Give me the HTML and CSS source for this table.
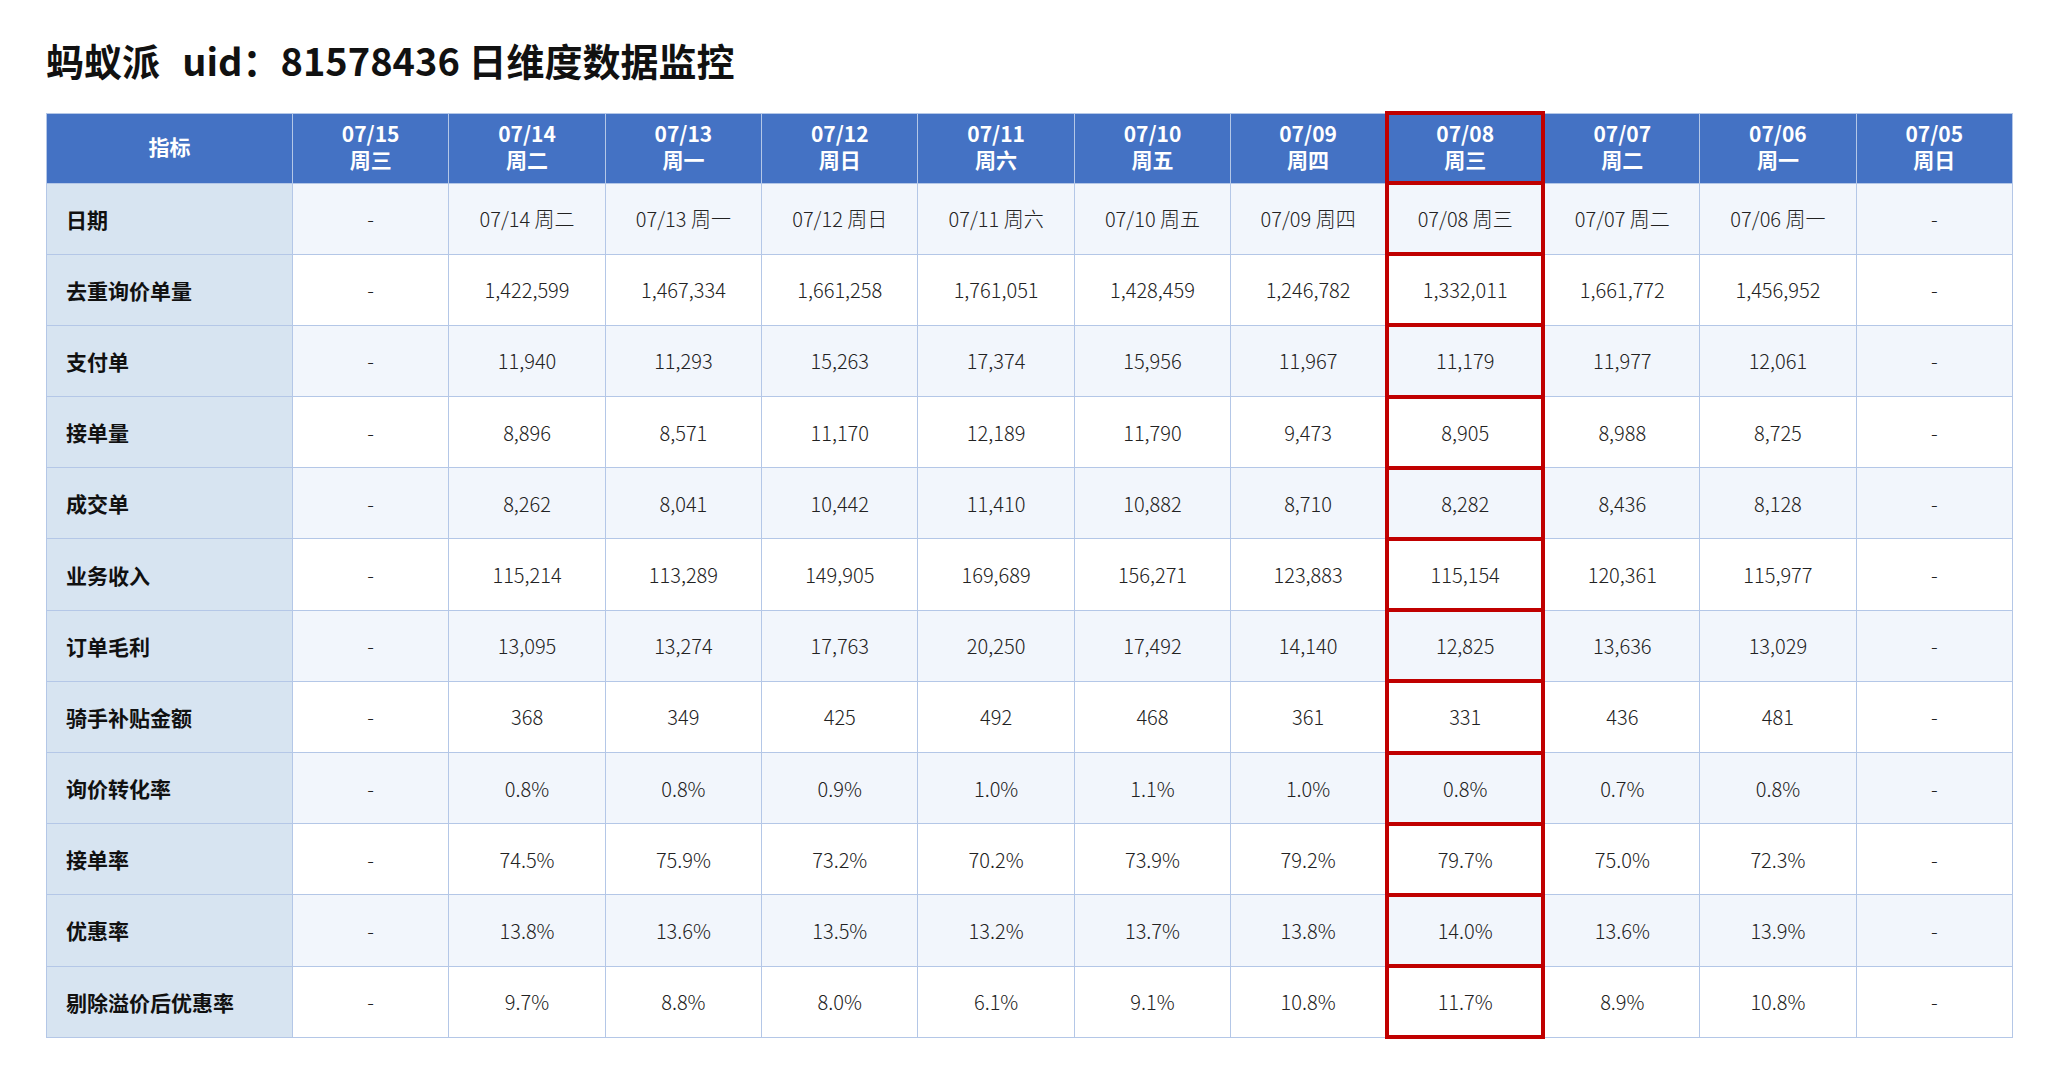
FILE: index.html
```html
<!DOCTYPE html>
<html lang="zh-CN">
<head>
<meta charset="utf-8">
<title>蚂蚁派 日维度数据监控</title>
<link rel="stylesheet" href="styles.css">
</head>
<body>
<div class="page">
  <h1 class="title">蚂蚁派<span class="gap">&nbsp;&nbsp;</span>uid：81578436 日维度数据监控</h1>
  <table class="grid">
    <colgroup>
      <col class="c-label">
      <col><col><col><col><col><col><col><col><col><col><col>
    </colgroup>
    <thead>
      <tr>
        <th>指标</th>
        <th>07/15<br>周三</th>
        <th>07/14<br>周二</th>
        <th>07/13<br>周一</th>
        <th>07/12<br>周日</th>
        <th>07/11<br>周六</th>
        <th>07/10<br>周五</th>
        <th>07/09<br>周四</th>
        <th class="hl">07/08<br>周三</th>
        <th>07/07<br>周二</th>
        <th>07/06<br>周一</th>
        <th>07/05<br>周日</th>
      </tr>
    </thead>
    <tbody>
      <tr class="alt">
        <td class="label">日期</td>
        <td>-</td><td>07/14 周二</td><td>07/13 周一</td><td>07/12 周日</td><td>07/11 周六</td><td>07/10 周五</td><td>07/09 周四</td><td class="hl">07/08 周三</td><td>07/07 周二</td><td>07/06 周一</td><td>-</td>
      </tr>
      <tr>
        <td class="label">去重询价单量</td>
        <td>-</td><td>1,422,599</td><td>1,467,334</td><td>1,661,258</td><td>1,761,051</td><td>1,428,459</td><td>1,246,782</td><td class="hl">1,332,011</td><td>1,661,772</td><td>1,456,952</td><td>-</td>
      </tr>
      <tr class="alt">
        <td class="label">支付单</td>
        <td>-</td><td>11,940</td><td>11,293</td><td>15,263</td><td>17,374</td><td>15,956</td><td>11,967</td><td class="hl">11,179</td><td>11,977</td><td>12,061</td><td>-</td>
      </tr>
      <tr>
        <td class="label">接单量</td>
        <td>-</td><td>8,896</td><td>8,571</td><td>11,170</td><td>12,189</td><td>11,790</td><td>9,473</td><td class="hl">8,905</td><td>8,988</td><td>8,725</td><td>-</td>
      </tr>
      <tr class="alt">
        <td class="label">成交单</td>
        <td>-</td><td>8,262</td><td>8,041</td><td>10,442</td><td>11,410</td><td>10,882</td><td>8,710</td><td class="hl">8,282</td><td>8,436</td><td>8,128</td><td>-</td>
      </tr>
      <tr>
        <td class="label">业务收入</td>
        <td>-</td><td>115,214</td><td>113,289</td><td>149,905</td><td>169,689</td><td>156,271</td><td>123,883</td><td class="hl">115,154</td><td>120,361</td><td>115,977</td><td>-</td>
      </tr>
      <tr class="alt">
        <td class="label">订单毛利</td>
        <td>-</td><td>13,095</td><td>13,274</td><td>17,763</td><td>20,250</td><td>17,492</td><td>14,140</td><td class="hl">12,825</td><td>13,636</td><td>13,029</td><td>-</td>
      </tr>
      <tr>
        <td class="label">骑手补贴金额</td>
        <td>-</td><td>368</td><td>349</td><td>425</td><td>492</td><td>468</td><td>361</td><td class="hl">331</td><td>436</td><td>481</td><td>-</td>
      </tr>
      <tr class="alt">
        <td class="label">询价转化率</td>
        <td>-</td><td>0.8%</td><td>0.8%</td><td>0.9%</td><td>1.0%</td><td>1.1%</td><td>1.0%</td><td class="hl">0.8%</td><td>0.7%</td><td>0.8%</td><td>-</td>
      </tr>
      <tr>
        <td class="label">接单率</td>
        <td>-</td><td>74.5%</td><td>75.9%</td><td>73.2%</td><td>70.2%</td><td>73.9%</td><td>79.2%</td><td class="hl">79.7%</td><td>75.0%</td><td>72.3%</td><td>-</td>
      </tr>
      <tr class="alt">
        <td class="label">优惠率</td>
        <td>-</td><td>13.8%</td><td>13.6%</td><td>13.5%</td><td>13.2%</td><td>13.7%</td><td>13.8%</td><td class="hl">14.0%</td><td>13.6%</td><td>13.9%</td><td>-</td>
      </tr>
      <tr>
        <td class="label">剔除溢价后优惠率</td>
        <td>-</td><td>9.7%</td><td>8.8%</td><td>8.0%</td><td>6.1%</td><td>9.1%</td><td>10.8%</td><td class="hl">11.7%</td><td>8.9%</td><td>10.8%</td><td>-</td>
      </tr>
    </tbody>
  </table>
</div>
</body>
</html>
```

FILE: styles.css
```css
html, body {
  margin: 0;
  padding: 0;
  background: #ffffff;
}

body {
  font-family: "Noto Sans CJK SC", "Noto Sans", sans-serif;
  color: #333333;
}

.page {
  padding: 36px 43px 0 46px;
}

.title {
  margin: 0 0 27px 0;
  font-size: 38px;
  line-height: 48px;
  font-weight: 700;
  color: #111111;
}

.title .gap {
  padding-right: 5px;
}

.grid {
  width: 1967px;
  border-collapse: collapse;
  table-layout: fixed;
}

.c-label {
  width: 246px;
}

.grid th,
.grid td {
  border: 1px solid #b4c7e7;
  text-align: center;
  vertical-align: middle;
  padding: 0;
}

.grid thead tr {
  height: 70px;
}

.grid th {
  background: #4472c4;
  color: #ffffff;
  font-size: 21px;
  line-height: 26px;
  font-weight: 700;
  padding-bottom: 5px;
}

.grid tbody tr {
  height: 71.2px;
  background: #ffffff;
}

.grid tbody tr.alt {
  background: #f2f6fc;
}

.grid td {
  font-size: 20px;
  font-weight: 300;
  color: #222222;
}

.grid td.label {
  background: #d7e4f1;
  text-align: left;
  padding-left: 19px;
  font-size: 21px;
  font-weight: 700;
  color: #111111;
}

.grid th.hl,
.grid td.hl {
  border: 4px solid #c00000;
}
```
